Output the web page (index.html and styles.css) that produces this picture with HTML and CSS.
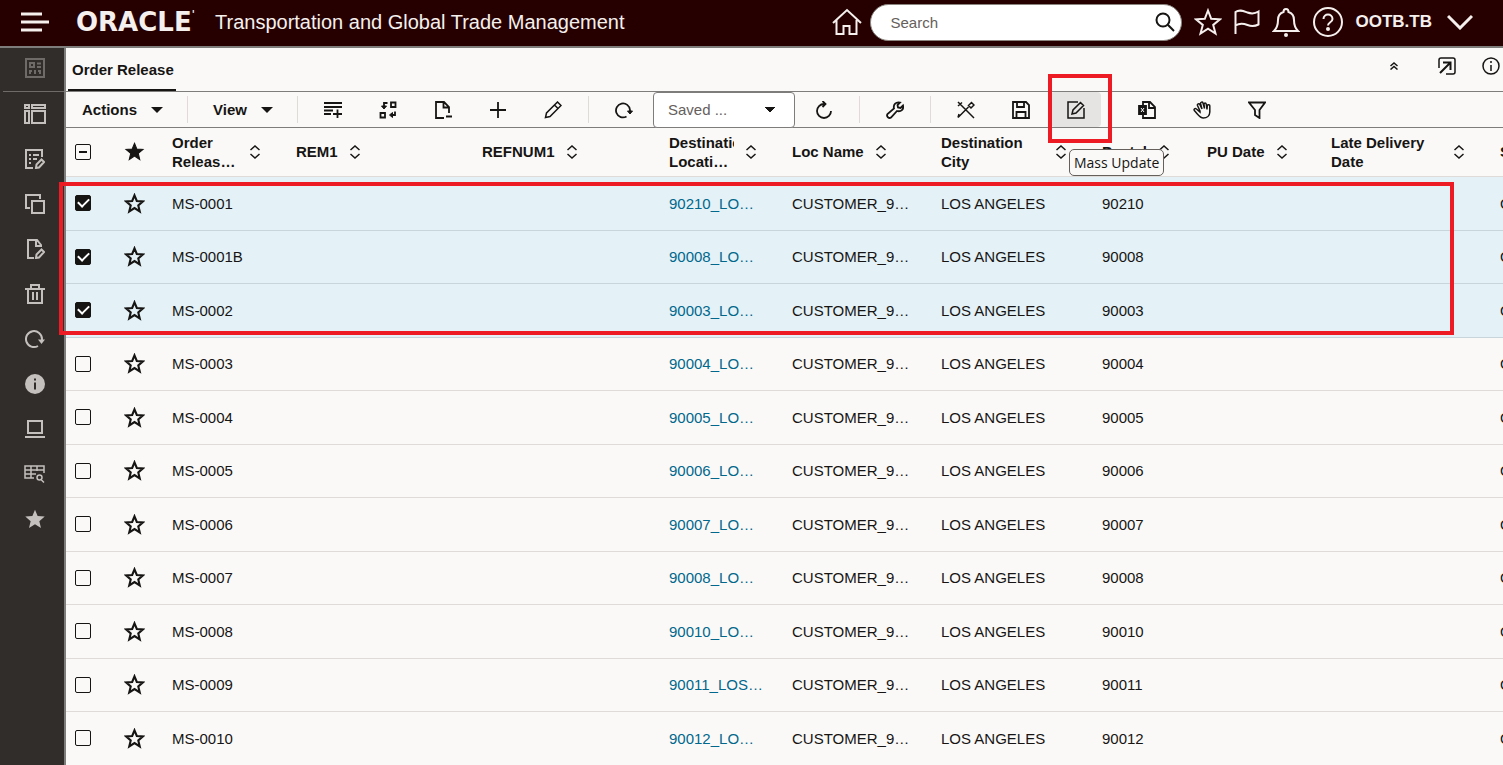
FILE: index.html
```html
<!DOCTYPE html>
<html lang="en">
<head>
    <meta charset="UTF-8">
    <meta name="viewport" content="width=device-width, initial-scale=1.0">
    <title>Order Release - Transportation and Global Trade Management</title>
    <link rel="stylesheet" href="styles.css">
</head>
<body>
    <svg class="symbols" aria-hidden="true">
        <symbol id="star" viewBox="0 0 20 20"><path d="M10 2.200l2.200 5.400 5.900.4-4.500 3.800 1.400 5.800-5-3.200-5 3.200 1.400-5.800L1.900 8l5.900-.4z"/></symbol>
        <symbol id="sort" viewBox="0 0 12 14"><path d="M1.500 5L6 1l4.500 4M1.500 9L6 13l4.500-4"/></symbol>
    </svg>

    <header class="topbar">
        <button class="icon-btn menu-btn" type="button" aria-label="Menu">
            <svg width="28" height="20" viewBox="0 0 28 20"><path d="M0 2h21M0 10h28M0 18h21"/></svg>
        </button>
        <span class="logo">ORACLE<sup>'</sup></span>
        <span class="app-name">Transportation and Global Trade Management</span>
        <div class="top-actions">
            <div class="search-group">
                <button class="icon-btn" type="button" aria-label="Home">
                    <svg width="30" height="28" viewBox="0 0 30 28"><path d="M1 15L15 2l14 13M4.500 12v14h7v-8h6v8h7V12"/></svg>
                </button>
                <div class="search">
                    <input type="text" placeholder="Search" aria-label="Search">
                    <svg width="20" height="20" viewBox="0 0 20 20"><circle cx="8" cy="8" r="6.500"/><path d="M12.800 12.800L19 19"/></svg>
                </div>
            </div>
            <button class="icon-btn" type="button" aria-label="Favorites">
                <svg width="28" height="28" viewBox="0 0 28 28"><path d="M14 2.500l3.200 8.300 8.800.5-6.800 5.600 2.300 8.700-7.500-4.900-7.500 4.900 2.300-8.700L2 11.300l8.800-.5z"/></svg>
            </button>
            <button class="icon-btn" type="button" aria-label="Flags">
                <svg width="26" height="26" viewBox="0 0 26 26"><path d="M1.500 25V3c4-3 8-1 12 .5 4 1.500 7 1.500 11-1v13c-4 2-7 2-11 .5-4-1.500-8-2-12 .5"/></svg>
            </button>
            <button class="icon-btn" type="button" aria-label="Notifications">
                <svg width="28" height="30" viewBox="0 0 28 30"><path d="M2 24c3-3 4-6 4-11 0-4 2-7 5.500-8 0-4 5-4 5 0C20 6 22 9 22 13c0 5 1 8 4 11z"/><circle class="dot" cx="14" cy="28" r="2"/></svg>
            </button>
            <button class="icon-btn" type="button" aria-label="Help">
                <svg width="32" height="32" viewBox="0 0 32 32"><circle cx="16" cy="16" r="14"/><path d="M11.500 13c0-6 9-6 9 0 0 3.500-4.500 3-4.500 6.500"/><circle class="dot" cx="16" cy="23" r="2"/></svg>
            </button>
            <button class="user-btn" type="button">
                OOTB.TB
                <svg width="26" height="16" viewBox="0 0 26 16"><path d="M1 2l12 12L25 2"/></svg>
            </button>
        </div>
    </header>

    <div class="layout">
        <nav class="sidebar" aria-label="Actions">
            <button class="side-btn disabled" type="button" aria-label="Workbench">
                <svg width="20" height="20" viewBox="0 0 20 20"><path d="M1 1h18v18H1zM5 5h4v4H5zM12 5.500h4M12 9h4M5 12v4M10 12v4M15 12v4M4 13h3M13 13h3"/></svg>
            </button>
            <button class="side-btn" type="button" aria-label="Layout">
                <svg width="22" height="20" viewBox="0 0 22 20"><path d="M1 1h4v3H1zM8 1h13v3H8zM1 7h4v12H1zM8 7h13v12H8z"/></svg>
            </button>
            <button class="side-btn" type="button" aria-label="Edit list">
                <svg width="20" height="20" viewBox="0 0 20 20"><path d="M8 19H1V1h16v7M4 6h2M8 6h6M4 10h2M8 10h4M4 14h2M11 19l.5-3.500 5-5 2.500 2.500-5 5.500z"/></svg>
            </button>
            <button class="side-btn" type="button" aria-label="Copy">
                <svg width="20" height="20" viewBox="0 0 20 20"><path d="M7 7h12v12H7zM5 14H1V1h14v4"/></svg>
            </button>
            <button class="side-btn" type="button" aria-label="Edit document">
                <svg width="20" height="20" viewBox="0 0 20 20"><path d="M9 19H3V1h9l4 5v2M11 1v6h5M11 19l.5-3.500 5-5 2.500 2.500-5 5.500z"/></svg>
            </button>
            <button class="side-btn" type="button" aria-label="Delete">
                <svg width="20" height="20" viewBox="0 0 20 20"><path d="M0 5h20M6 5V1h8v4M3 5v14h14V5M8 8v8M12 8v8"/></svg>
            </button>
            <button class="side-btn" type="button" aria-label="Refresh">
                <svg width="20" height="20" viewBox="0 0 20 20"><path d="M13 17A8 8 0 1 1 17 10v1"/><path class="solid" d="M13 10.500h7L16.500 15z"/></svg>
            </button>
            <button class="side-btn" type="button" aria-label="Information">
                <svg width="20" height="20" viewBox="0 0 20 20"><circle class="solid" cx="10" cy="10" r="10"/><path class="cutout" d="M10 4.500v2M10 8.500v7"/></svg>
            </button>
            <button class="side-btn" type="button" aria-label="Screen">
                <svg width="20" height="20" viewBox="0 0 20 20"><path d="M3 2h14v12H3zM0 18h20"/></svg>
            </button>
            <button class="side-btn" type="button" aria-label="Search table">
                <svg width="22" height="20" viewBox="0 0 22 20"><path class="thin" d="M10 14H1V2h19v7M1 6h19M1 10h11M7 2v12M13 2v5M18 13.500a2.500 2.500 0 1 1-5 0 2.500 2.500 0 0 1 5 0zM17 15.500l3 3"/></svg>
            </button>
            <button class="side-btn" type="button" aria-label="Favorites">
                <svg class="solid" width="24" height="24"><use href="#star"/></svg>
            </button>
        </nav>

        <main class="content">
            <div class="tabs">
                <a class="tab" href="#">Order Release</a>
                <div class="tab-actions">
                    <button class="icon-btn" type="button" aria-label="Collapse">
                        <svg width="8" height="8" viewBox="0 0 8 8"><path d="M.5 4L4 1l3.500 3M.5 7.500L4 4.500l3.500 3"/></svg>
                    </button>
                    <button class="icon-btn" type="button" aria-label="Open in new window">
                        <svg width="18" height="18" viewBox="0 0 18 18"><path d="M1 11V3q0-2 2-2h12q2 0 2 2v12q0 2-2 2H8"/><path class="bold" d="M2 16L12 6M5 5.500h7.500V13"/></svg>
                    </button>
                    <button class="icon-btn" type="button" aria-label="Information">
                        <svg width="18" height="18" viewBox="0 0 18 18"><circle cx="9" cy="9" r="8"/><path d="M9 4v2M9 8v6"/></svg>
                    </button>
                </div>
            </div>

            <div class="toolbar">
                <button class="menu" type="button">Actions <span class="caret"></span></button>
                <span class="sep"></span>
                <button class="menu" type="button">View <span class="caret"></span></button>
                <span class="sep"></span>
                <div class="group">
                    <button class="tool" type="button" aria-label="Add line">
                        <svg width="18" height="18" viewBox="0 0 18 18"><path d="M0 2h18M0 6h18M0 9.500h9M0 13h7M9 13h9M13.500 8.500V17"/></svg>
                    </button>
                    <button class="tool" type="button" aria-label="Swap">
                        <svg width="18" height="18" viewBox="0 0 18 18"><path d="M12 1.500h4.500V6H12zM1.500 12H6v4.500H1.500zM8.500 2H5v4M16 10.500V14h-3"/><path class="fill thin" d="M2.500 5h5L5 8zM13.500 11.500v5l-3-2.500z"/></svg>
                    </button>
                    <button class="tool" type="button" aria-label="Remove document">
                        <svg width="18" height="18" viewBox="0 0 18 18"><path d="M10 17H2V1h8l5 5v6M9.500 1v5.500H15M12 15.500h6"/></svg>
                    </button>
                    <button class="tool" type="button" aria-label="New">
                        <svg width="18" height="18" viewBox="0 0 18 18"><path d="M9 1v16M1 9h16"/></svg>
                    </button>
                    <button class="tool" type="button" aria-label="Edit">
                        <svg width="18" height="18" viewBox="0 0 18 18"><path class="slim" d="M1.500 16.500l1-4.500L13.500 1l3.500 3.500L6 15.500zM10.500 4l3.500 3.500"/></svg>
                    </button>
                </div>
                <span class="sep"></span>
                <button class="tool" type="button" aria-label="Rerun">
                    <svg width="18" height="18" viewBox="0 0 18 18"><path d="M11.500 15.500A7 7 0 1 1 15 9v2"/><path class="fill thin" d="M12.500 10h5L15 13z"/></svg>
                </button>
                <select class="saved" aria-label="Saved searches">
                    <option>Saved ...</option>
                </select>
                <button class="tool" type="button" aria-label="Refresh">
                    <svg width="18" height="18" viewBox="0 0 18 18"><path d="M16 10A7 7 0 1 1 9 3h1M7.500 0l3 3-3 3"/></svg>
                </button>
                <span class="sep"></span>
                <button class="tool" type="button" aria-label="Tools">
                    <svg width="18" height="18" viewBox="0 0 18 18"><path d="M8 7.500C7 3.500 10 .5 14 1.500L11.500 4l.5 2.500 2.500.5L17 4.500c1 4-2 6.500-6 5.500l-6 6.500c-2 1.500-5-1-3.500-3.500z"/></svg>
                </button>
                <span class="sep"></span>
                <div class="group">
                    <button class="tool" type="button" aria-label="Design">
                        <svg width="18" height="18" viewBox="0 0 18 18"><path class="slim" d="M1 1l16 16M1 5l4-3.500M1 16.500L11.500 6M11.500 4.500l3-3L17 4l-3 3zM1 16.500l1-3.500"/></svg>
                    </button>
                    <button class="tool" type="button" aria-label="Save">
                        <svg width="18" height="18" viewBox="0 0 18 18"><path d="M1 1h13l3 3v13H1zM5 1v5h7V1M4.500 17v-6h9v6"/></svg>
                    </button>
                    <div class="tool-wrap">
                        <button class="tool active" type="button" aria-describedby="tip">
                            <svg width="18" height="18" viewBox="0 0 18 18"><path class="slim" d="M11 1H1v16h16V7M5 13l1-4L13.500 1.500 16.500 4.500 9 12z"/></svg>
                        </button>
                        <span class="mark"></span>
                        <span class="tooltip" id="tip" role="tooltip">Mass Update</span>
                    </div>
                </div>
                <span class="sep"></span>
                <div class="group">
                    <button class="tool" type="button" aria-label="Export to Excel">
                        <svg width="18" height="18" viewBox="0 0 18 18"><path d="M5 4V1h7l5 5v11H5v-3M11 1v6h6"/><path class="fill" d="M1 5h7v8H1z"/><path class="cross" d="M3 7l3 4M6 7l-3 4"/></svg>
                    </button>
                    <button class="tool" type="button" aria-label="Pan">
                        <svg width="18" height="18" viewBox="0 0 18 18"><path class="slim" d="M7 10L4.500 4.500c-.5-1.500 1.500-2.500 2.300-1L9 8 7.500 2.500c0-1.500 2-2 2.500-.5L11.500 7.500 11 3c.2-1.300 2-1.300 2.200 0L14 8.500l.3-4c.4-1.200 2.500-1 2.500.3V11c0 4-3 6-6.500 6-3 0-4-2-9-7.500C.5 8 2 7 3.500 8L7 11z"/></svg>
                    </button>
                    <button class="tool" type="button" aria-label="Filter">
                        <svg width="18" height="18" viewBox="0 0 18 18"><path d="M1 1.500h16L11.500 9v8L7 14V9z"/></svg>
                    </button>
                </div>
            </div>

            <div class="grid">
                <div class="grid-view">
                    <table>
                        <colgroup>
                            <col class="c-check"><col class="c-star"><col class="c-id"><col class="c-rem"><col class="c-ref"><col class="c-loc">
                            <col class="c-name"><col class="c-city"><col class="c-postal"><col class="c-pu"><col class="c-late"><col class="c-last">
                        </colgroup>
                        <thead>
                            <tr>
                                <th><input type="checkbox" class="partial" aria-label="Select all"></th>
                                <th><svg class="star full"><use href="#star"/></svg></th>
                                <th><div class="head"><span>Order Release ID</span><svg class="sort"><use href="#sort"/></svg></div></th>
                                <th><div class="head"><span>REM1</span><svg class="sort"><use href="#sort"/></svg></div></th>
                                <th><div class="head"><span>REFNUM1</span><svg class="sort"><use href="#sort"/></svg></div></th>
                                <th><div class="head"><span>Destination Location ID</span><svg class="sort"><use href="#sort"/></svg></div></th>
                                <th><div class="head"><span>Loc Name</span><svg class="sort"><use href="#sort"/></svg></div></th>
                                <th><div class="head"><span>Destination City</span><svg class="sort"><use href="#sort"/></svg></div></th>
                                <th><div class="head"><span>Postal</span><svg class="sort"><use href="#sort"/></svg></div></th>
                                <th><div class="head"><span>PU Date</span><svg class="sort"><use href="#sort"/></svg></div></th>
                                <th><div class="head"><span>Late Delivery Date</span><svg class="sort"><use href="#sort"/></svg></div></th>
                                <th><div class="head"><span>S</span></div></th>
                            </tr>
                        </thead>
                        <tbody id="rows"></tbody>
                    </table>
                </div>
                <div class="mark-rows"></div>
            </div>
        </main>
    </div>

    <script src="script.js"></script>
</body>
</html>
```

FILE: script.js
```js
const rows = [
    { id: 'MS-0001', location: '90210_LO…', postal: '90210', selected: true },
    { id: 'MS-0001B', location: '90008_LO…', postal: '90008', selected: true },
    { id: 'MS-0002', location: '90003_LO…', postal: '90003', selected: true },
    { id: 'MS-0003', location: '90004_LO…', postal: '90004' },
    { id: 'MS-0004', location: '90005_LO…', postal: '90005' },
    { id: 'MS-0005', location: '90006_LO…', postal: '90006' },
    { id: 'MS-0006', location: '90007_LO…', postal: '90007' },
    { id: 'MS-0007', location: '90008_LO…', postal: '90008' },
    { id: 'MS-0008', location: '90010_LO…', postal: '90010' },
    { id: 'MS-0009', location: '90011_LOS…', postal: '90011' },
    { id: 'MS-0010', location: '90012_LO…', postal: '90012' },
];

document.getElementById('rows').innerHTML = rows.map((row) => `
    <tr class="${row.selected ? 'selected' : ''}">
        <td><input type="checkbox" aria-label="Select ${row.id}" ${row.selected ? 'checked' : ''}></td>
        <td><svg class="star"><use href="#star"/></svg></td>
        <td>${row.id}</td>
        <td></td>
        <td></td>
        <td><a href="#">${row.location}</a></td>
        <td>CUSTOMER_9…</td>
        <td>LOS ANGELES</td>
        <td>${row.postal}</td>
        <td></td>
        <td></td>
        <td>O</td>
    </tr>
`).join('');
```

FILE: styles.css
```css
* {
    box-sizing: border-box;
}

body {
    margin: 0;
    height: 100vh;
    overflow: hidden;
    display: flex;
    flex-direction: column;
    font-family: "Liberation Sans", Arial, sans-serif;
    font-size: 15px;
    color: #161513;
    background-color: #fbf9f8;
}

button {
    margin: 0;
    padding: 0;
    border: none;
    background: none;
    color: inherit;
    font: inherit;
    cursor: pointer;
}

svg {
    display: block;
    fill: none;
    stroke: currentColor;
    stroke-width: 2;
}

a {
    color: #00688c;
    text-decoration: none;
}

.symbols {
    position: absolute;
    width: 0;
    height: 0;
}

/* top bar */
.topbar {
    display: flex;
    align-items: center;
    flex: none;
    height: 48px;
    padding: 0 30px 2px 21px;
    border-bottom: 2px solid #7f7d7c;
    background-color: #260000;
    color: #f5f0ee;
}

.menu-btn {
    margin-right: 27px;
}

.menu-btn svg {
    stroke-width: 3;
}

.logo {
    display: flex;
    width: 139px;
    font-family: "DejaVu Sans", sans-serif;
    font-size: 26px;
    font-weight: bold;
    line-height: 30px;
}

.logo sup {
    font-size: 10px;
    line-height: 16px;
}

.app-name {
    font-size: 20px;
    white-space: nowrap;
}

.top-actions {
    display: flex;
    align-items: center;
    gap: 12px;
    margin-left: auto;
}

.search-group {
    display: flex;
    align-items: center;
    gap: 8px;
}

.search {
    display: flex;
    align-items: center;
    width: 312px;
    height: 37px;
    padding: 0 6px 0 20px;
    border: 1px solid #8b8580;
    border-radius: 19px;
    background-color: #fff;
    color: #161513;
}

.search input {
    flex: 1;
    min-width: 0;
    padding: 0;
    border: none;
    outline: none;
    background: none;
    font: inherit;
}

.search input::placeholder,
.saved {
    color: #65605c;
}

.topbar .dot {
    fill: currentColor;
    stroke: none;
}

.user-btn {
    display: flex;
    align-items: center;
    gap: 15px;
    font-size: 17px;
    font-weight: bold;
}

.user-btn svg {
    stroke-width: 3;
}

/* sidebar */
.layout {
    display: flex;
    flex: 1;
    min-height: 0;
}

.sidebar {
    flex: none;
    width: 66px;
    padding-left: 3px;
    border-right: 2px solid #7f7d7c;
    background-color: #312d2a;
    color: #c4c0bd;
}

.side-btn {
    display: flex;
    align-items: center;
    justify-content: center;
    width: 100%;
    height: 45px;
    padding: 0 0 1px 2px;
}

.side-btn.disabled {
    height: 44px;
    padding-bottom: 3px;
    border-bottom: 1px solid #6f6b68;
    color: #6f6b68;
}

.side-btn .solid {
    fill: currentColor;
    stroke: none;
}

.side-btn .cutout {
    stroke: #312d2a;
}

.side-btn .thin {
    stroke-width: 1.5;
}

/* tab strip */
.content {
    flex: 1;
    min-width: 0;
}

.tabs {
    display: flex;
    justify-content: space-between;
    height: 44px;
    padding: 0 3px 0 2px;
    border-bottom: 1px solid #7f7d7c;
}

.tab {
    padding: 0 2px 0 4px;
    border-bottom: 2px solid #161513;
    color: #161513;
    font-weight: bold;
    line-height: 44px;
}

.tab-actions {
    display: flex;
    align-items: center;
    gap: 26px;
    padding-bottom: 8px;
}

.tab-actions svg {
    stroke-width: 1.5;
}

.tab-actions .icon-btn:first-child {
    margin-right: 14px;
}

.tab-actions .bold {
    stroke-width: 2;
}

/* toolbar */
.toolbar {
    display: flex;
    align-items: center;
    height: 36px;
    padding-left: 1px;
    border-bottom: 1px solid #7f7d7c;
}

.menu {
    display: flex;
    align-items: center;
    gap: 14px;
    height: 35px;
    padding: 0 14px 0 15px;
    font-weight: bold;
}

.caret {
    border: solid transparent;
    border-width: 6px 6px 0;
    border-top-color: #161513;
}

.sep {
    flex: none;
    width: 1px;
    height: 27px;
    margin: 0 10px;
    background-color: #dedbd9;
}

.group {
    display: flex;
    gap: 5px;
}

.tool {
    display: flex;
    flex: none;
    align-items: center;
    justify-content: center;
    width: 50px;
    height: 35px;
    border-radius: 4px;
}

.tool svg {
    stroke-width: 1.8;
}

.tool .slim {
    stroke-width: 1.5;
}

.tool .thin {
    stroke-width: 1;
}

.tool .fill {
    fill: currentColor;
}

.tool .cross {
    stroke: #fff;
    stroke-width: 1;
}

.tool.active {
    background-color: #e6e4e3;
}

.saved {
    flex: none;
    width: 142px;
    height: 36px;
    margin: 0 4px;
    padding: 0 14px;
    border: 1px solid #7f7d7c;
    border-radius: 4px;
    appearance: none;
    background-color: #fff;
    background-image: conic-gradient(from -45deg at 50% 100%, #161513 90deg, transparent 0);
    background-repeat: no-repeat;
    background-position: right 19px center;
    background-size: 10px 5px;
    font: inherit;
}

.tool-wrap {
    position: relative;
}

.mark {
    position: absolute;
    top: -18px;
    left: -3px;
    width: 64px;
    height: 69px;
    border: 4px solid #ed1c24;
    pointer-events: none;
}

.tooltip {
    position: absolute;
    z-index: 2;
    top: 57px;
    left: 18px;
    padding: 0 4px;
    border: 1px solid #65605c;
    border-radius: 5px;
    background-color: #fbf9f8;
    font-family: "Open Sans", sans-serif;
    font-size: 14px;
    line-height: 25px;
    white-space: nowrap;
}

/* data grid */
.grid {
    position: relative;
}

.grid-view {
    overflow: hidden;
}

table {
    width: 1542px;
    table-layout: fixed;
    border-collapse: collapse;
}

.c-check { width: 43px; }
.c-star { width: 51px; }
.c-id { width: 124px; }
.c-rem { width: 186px; }
.c-ref { width: 187px; }
.c-loc { width: 123px; }
.c-name { width: 149px; }
.c-city { width: 161px; }
.c-postal { width: 105px; }
.c-pu { width: 124px; }
.c-late { width: 169px; }
.c-last { width: 120px; }

th,
td {
    padding: 0 12px 2px;
    text-align: left;
    white-space: nowrap;
    box-shadow: inset 0 -1px #dedbd9;
}

th:first-child,
td:first-child {
    padding: 0 9px 2px;
}

th:nth-child(2),
td:nth-child(2) {
    padding: 0 15px 2px;
}

th {
    height: 49px;
}

td {
    height: 54px;
}

tr:nth-child(even) td {
    height: 53px;
}

.selected td {
    background-color: #e4f1f7;
    box-shadow: inset 0 -1px #c8d5db;
}

.head {
    display: flex;
    align-items: center;
}

.head span {
    display: -webkit-box;
    min-width: 0;
    overflow: hidden;
    -webkit-box-orient: vertical;
    -webkit-line-clamp: 2;
    line-height: 19px;
    white-space: normal;
}

.sort {
    flex: none;
    width: 34px;
    height: 14px;
    stroke-width: 1.5;
}

.star {
    width: 21px;
    height: 21px;
}

.star.full {
    fill: currentColor;
    stroke-width: 1;
}

input[type="checkbox"] {
    display: grid;
    place-items: center;
    width: 16px;
    height: 16px;
    margin: 0;
    border: 1px solid #161513;
    border-radius: 2px;
    appearance: none;
}

input[type="checkbox"]:checked {
    background-color: #161513;
}

input[type="checkbox"]:checked::before {
    content: "";
    width: 9px;
    height: 5px;
    margin-bottom: 3px;
    border: solid #fff;
    border-width: 0 0 2px 2px;
    transform: rotate(-45deg);
}

.partial::before {
    content: "";
    width: 8px;
    height: 2px;
    background-color: #161513;
}

.mark-rows {
    position: absolute;
    top: 54px;
    left: -7px;
    right: 49px;
    height: 153px;
    border: 4px solid #ed1c24;
    pointer-events: none;
}
```
